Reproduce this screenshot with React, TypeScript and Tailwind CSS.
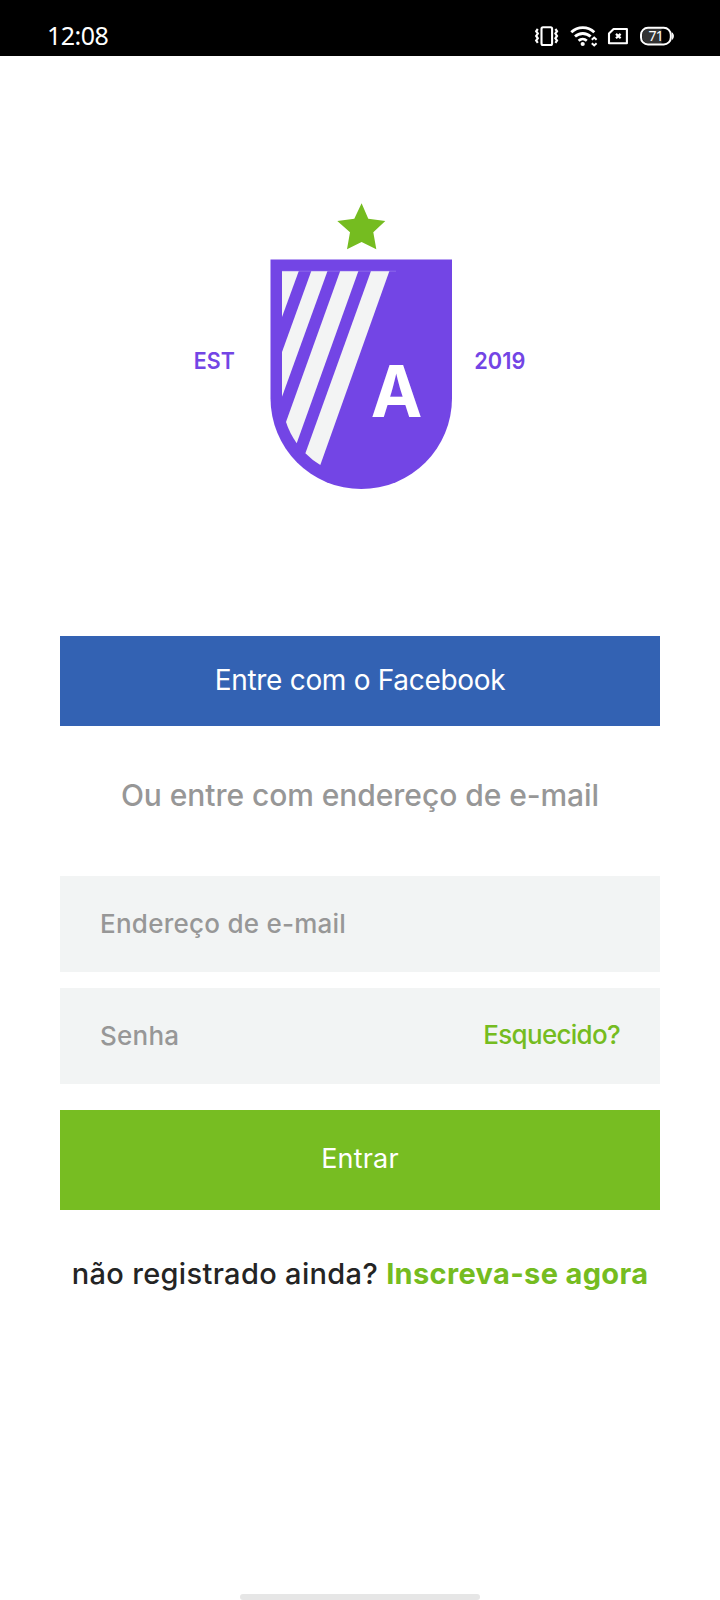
import type { ReactNode } from 'react';

function StatusIcons() {
    return (
        <svg width="144" height="28" viewBox="532 22 144 28" fill="none" stroke="#fff">
            {/* vibrate */}
            <rect x="541.5" y="27.2" width="10.6" height="17.8" rx="1.5" strokeWidth="2.1" />
            <path d="M537.8 29l-1.6 2.2 1.6 2.3-1.6 2.4 1.6 2.4-1.6 2.3 1.6 2.2M555.4 29l1.6 2.2-1.6 2.3 1.6 2.4-1.6 2.4 1.6 2.3-1.6 2.2" strokeWidth="2.2" />
            {/* wifi */}
            <path d="M571.3 32.2a16.6 16.6 0 0 1 23 0" strokeWidth="2.8" />
            <path d="M575 36.6a11.3 11.3 0 0 1 15.6 0" strokeWidth="2.8" />
            <path d="M578.6 40.7a6 6 0 0 1 8.2 0" strokeWidth="2.6" />
            <circle cx="582.7" cy="44" r="2.1" fill="#fff" stroke="none" />
            <path d="M591.8 39.8l2.4-2.2 2.4 2.2M591.8 43.2l2.4 2.2 2.4-2.2" strokeWidth="2" />
            {/* sim */}
            <path d="M613.6 29H626.9V43.2H609V33.4Z" strokeWidth="2.1" strokeLinejoin="round" />
            <path d="M616 33.9l4.6 4.4M620.6 33.9l-4.6 4.4" strokeWidth="2.2" />
            {/* battery */}
            <path d="M650 28h11.5v16H650a8 8 0 0 1 0-16Z" fill="#333" stroke="none" />
            <rect x="641" y="27.8" width="29.8" height="16.6" rx="7" strokeWidth="2" />
            <path d="M672.2 32.8c1.6 1.8 1.6 4.8 0 6.6Z" fill="#fff" strokeWidth="1" />
            <text x="648.4" y="41" fill="#fff" stroke="none" className="font-['Noto_Sans',sans-serif] text-[14px]" textLength="15.4">71</text>
        </svg>
    );
}

function Logo() {
    return (
        <svg width="340" height="300" viewBox="190 196 340 300" className="font-['Inter',sans-serif]">
            <path d="M361.6 203.3l6.7 15.4 17 2.3-12 11.3 3 17-14.7-7.3-14.6 7.3 3-17-12.7-11.3 17-2.3Z" fill="#75bc20" />
            <path d="M270.5 259.5H452V398.3a90.75 90.75 0 0 1-181.5 0Z" fill="#7345e5" />
            <g fill="#f3f4f4">
                <path d="M282 271h16.8L282 317Z" />
                <path d="M311.3 271h16.2L282 396.7V352Z" />
                <path d="M340.2 271h18.2L296.7 443.2Q289.5 433 286 422Z" />
                <path d="M371 271h18.4L320.3 465Q312 460 305.4 453.2Z" />
            </g>
            <path d="M282 271.2H396" stroke="#a78af0" strokeWidth=".5" />
            <text x="370.7" y="417" fill="#fff" className="text-[71px] font-bold" textLength="51.6" lengthAdjust="spacingAndGlyphs">A</text>
            <g fill="#7345e5" className="text-[23px] font-semibold">
                <text x="193.8" y="369" textLength="41" lengthAdjust="spacingAndGlyphs">EST</text>
                <text x="474.3" y="369" textLength="51" lengthAdjust="spacingAndGlyphs">2019</text>
            </g>
        </svg>
    );
}

function Field({ label, children }: { label: string; children?: ReactNode }) {
    return (
        <div className="flex h-24 items-center justify-between bg-[#f2f4f4] px-10 pb-0.5 text-[26px] font-medium text-[#979797]">
            <span className="tracking-[0.25px]">{label}</span>
            {children}
        </div>
    );
}

export default function App() {
    return (
        <div className="flex h-[1600px] w-[720px] flex-col bg-white font-['Inter',sans-serif]">
            <header className="flex h-14 items-center justify-between bg-black pt-4 pr-11 pl-[47px]">
                <span className="pb-0.5 font-['Noto_Sans',sans-serif] text-[25px] leading-none tracking-[-0.5px] text-white">12:08</span>
                <StatusIcons />
            </header>

            <main className="flex flex-1 flex-col px-[60px] pt-[140px]">
                <div className="flex justify-center">
                    <Logo />
                </div>

                <button className="mt-[140px] h-[90px] bg-[#3362b3] pb-0.5 text-[28px] tracking-[-0.3px] text-white">
                    Entre com o Facebook
                </button>

                <p className="mt-[49px] h-10 text-center text-[30px] leading-10 font-medium tracking-[-0.06px] whitespace-nowrap text-[#979797]">
                    Ou entre com endereço de e-mail
                </p>

                <div className="mt-[61px] flex flex-col gap-4">
                    <Field label="Endereço de e-mail" />
                    <Field label="Senha">
                        <a className="pb-0.5 text-[26px] tracking-[-0.7px] text-[#75bc20]">Esquecido?</a>
                    </Field>
                </div>

                <button className="mt-[26px] h-[100px] bg-[#77bd22] pb-0.5 text-[27px] tracking-[0.2px] text-white">Entrar</button>

                <p className="mt-11 h-10 text-center text-[29px] leading-10 font-medium tracking-[0.34px] whitespace-nowrap text-[#242424]">
                    <span>não registrado ainda?</span> <a className="font-bold text-[#75bc20]">Inscreva-se agora</a>
                </p>
            </main>

            <div className="mx-auto h-1.5 w-60 rounded-full bg-[#e6e6e6]" />
        </div>
    );
}
